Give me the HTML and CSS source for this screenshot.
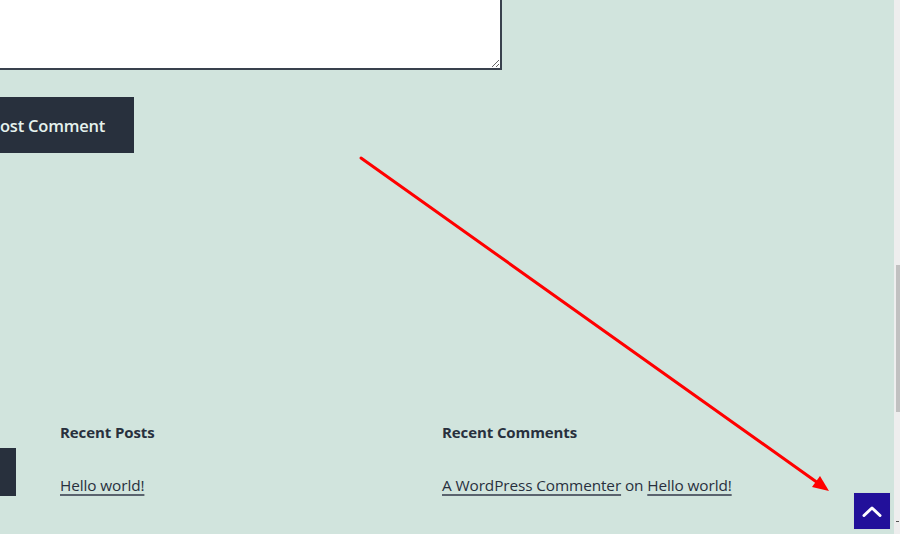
FILE: index.html
```html
<!DOCTYPE html>
<html lang="en">
<head>
<meta charset="utf-8">
<title>Post Comment</title>
<link rel="stylesheet" href="styles.css">
</head>
<body>
<div class="window">
  <main class="page">
    <form class="comment-form">
      <textarea class="comment-box" aria-label="Comment"></textarea>
      <button type="button" class="submit">Post Comment</button>
    </form>
    <footer class="widgets">
      <section class="widget search-widget">
        <div class="search-row">
          <span class="search-input"></span>
          <span class="search-btn"></span>
        </div>
      </section>
      <section class="widget">
        <h2 class="widget-title">Recent Posts</h2>
        <p class="widget-line"><a href="#">Hello world!</a></p>
      </section>
      <section class="widget">
        <h2 class="widget-title">Recent Comments</h2>
        <p class="widget-line"><a href="#">A WordPress Commenter</a> on <a href="#">Hello world!</a></p>
      </section>
    </footer>
    <svg class="annotation" width="894" height="534" viewBox="0 0 894 534" aria-hidden="true">
      <line x1="361" y1="158" x2="818" y2="483" stroke="#ff0000" stroke-width="3" stroke-linecap="round"/>
      <polygon points="829,491 812,487 820,476" fill="#ff0000"/>
    </svg>
    <a class="to-top" href="#" aria-label="Scroll to top">
      <svg width="20" height="12" viewBox="0 0 20 12"><polyline points="2,10.5 10,3 18,10.5" fill="none" stroke="#ffffff" stroke-width="3" stroke-linecap="round" stroke-linejoin="round"/></svg>
    </a>
  </main>
  <div class="scrollbar"><span class="thumb"></span><span class="tick"></span></div>
</div>
</body>
</html>
```

FILE: styles.css
```css
html, body {
  margin: 0;
  padding: 0;
  height: 100%;
  overflow: hidden;
}
body {
  background: #d1e4dd;
  font-family: "Open Sans", "Noto Sans", "Liberation Sans", sans-serif;
  color: #28303d;
}
.window {
  display: flex;
  height: 534px;
}
.page {
  position: relative;
  width: 894px;
  flex: 0 0 894px;
  overflow: hidden;
}
.comment-form {
  display: flex;
  flex-direction: column;
  align-items: flex-start;
  margin-left: -60px;
}
.comment-box {
  display: block;
  box-sizing: border-box;
  width: 562px;
  height: 110px;
  margin: -40px 0 0 0;
  border: 2px solid #39414d;
  background: #ffffff;
  resize: vertical;
  padding: 8px;
}
.submit {
  margin-top: 27px;
  height: 56px;
  width: 194px;
  box-sizing: border-box;
  background: #28303d;
  color: #e6f2ee;
  border: 1px solid #28303d;
  font-family: "Open Sans", "Noto Sans", sans-serif;
  font-size: 16.5px;
  font-weight: 600;
  letter-spacing: -0.2px;
  padding: 0 0 0 49px;
  text-align: left;
  white-space: nowrap;
}
.widgets {
  display: grid;
  grid-template-columns: repeat(3, 338px);
  column-gap: 44px;
  margin-left: -322px;
  margin-top: 267px;
}
.widget-title {
  margin: 0;
  font-size: 15px;
  font-weight: 700;
  line-height: 24px;
  letter-spacing: -0.1px;
}
.widget-line {
  margin: 29px 0 0 0;
  font-size: 15.35px;
  line-height: 24px;
  letter-spacing: -0.1px;
}
.widget-line a {
  color: #28303d;
  text-decoration: underline;
  text-decoration-thickness: 1.5px;
  text-underline-offset: 3px;
  text-decoration-color: #5a636e;
}
.search-row {
  display: flex;
  justify-content: flex-end;
  margin-top: 28px;
}
.search-btn {
  display: block;
  width: 16px;
  height: 48px;
  background: #28303d;
}
.annotation {
  position: absolute;
  left: 0;
  top: 0;
  pointer-events: none;
}
.to-top {
  position: absolute;
  left: 854px;
  top: 493px;
  width: 36px;
  height: 36px;
  background: #22109a;
  display: flex;
  align-items: center;
  justify-content: center;
  box-shadow: 0 0 0 1px #cfe0d9;
}
.scrollbar {
  flex: 0 0 6px;
  background: #eeeeee;
  display: flex;
  flex-direction: column;
  align-items: flex-end;
}
.thumb {
  display: block;
  width: 4px;
  height: 147px;
  margin-top: 265px;
  background: #c1c1c1;
}
.tick {
  display: block;
  width: 3px;
  height: 1px;
  margin-top: 109px;
  margin-right: 1px;
  background: #555555;
}
```
